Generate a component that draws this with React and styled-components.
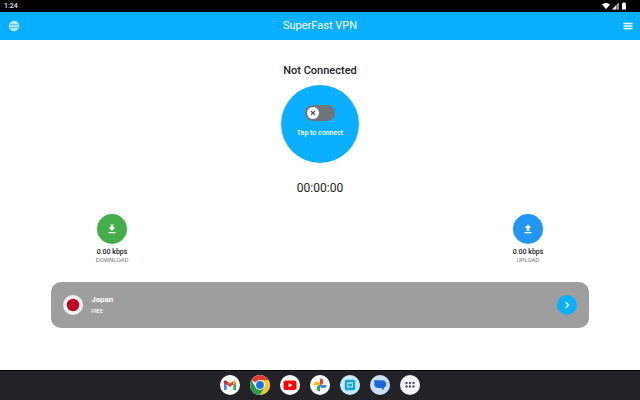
import React, { useState } from "react";
import styled, { createGlobalStyle } from "styled-components";

const GlobalStyle = createGlobalStyle`
  *, *::before, *::after { box-sizing: border-box; }
  body {
    margin: 0;
    background: #fff;
    color: #222;
    font-family: Roboto, "Liberation Sans", sans-serif;
  }
  button { font: inherit; color: inherit; border: 0; padding: 0; margin: 0; background: none; cursor: pointer; }
  svg { display: block; }
`;

const Screen = styled.div`
  min-height: 100vh;
  display: flex;
  flex-direction: column;
`;

const StatusBar = styled.div`
  height: 12px;
  padding: 0 12px 0 4px;
  display: flex;
  align-items: center;
  justify-content: space-between;
  background: #000;
  color: #e8e8e8;
  font-size: 7px;
  font-weight: 500;
  line-height: 12px;
`;

const StatusIcons = styled.div`
  display: flex;
  align-items: center;
  gap: 1px;
`;

const AppBar = styled.header`
  height: 28px;
  padding: 0 6px 0 8px;
  display: grid;
  grid-template-columns: 12px 1fr 14px;
  align-items: center;
  background: #0aafff;
  color: #fff;
`;

const Title = styled.h1`
  margin: 0;
  text-align: center;
  font-size: 11px;
  font-weight: 400;
  line-height: 16px;
`;

const IconButton = styled.button`
  width: 12px;
  height: 12px;
  display: grid;
  place-items: center;
  justify-self: ${(p) => (p.$end ? "end" : "start")};
`;

const Main = styled.main`
  flex: 1;
  display: flex;
  flex-direction: column;
  align-items: center;
  padding-top: 23px;
`;

const State = styled.p`
  margin: 0;
  font-size: 11px;
  font-weight: 500;
  line-height: 16px;
`;

const ConnectDisc = styled.label`
  width: 78px;
  height: 78px;
  margin-top: 6px;
  padding-top: 20px;
  display: flex;
  flex-direction: column;
  align-items: center;
  gap: 7px;
  border-radius: 50%;
  background: #0aafff;
  color: #fff;
  font-size: 7px;
  font-weight: 500;
  line-height: 10px;
  white-space: nowrap;
  cursor: pointer;
`;

const SwitchTrack = styled.span`
  width: 30px;
  height: 16px;
  padding: 2px;
  display: flex;
  align-items: center;
  justify-content: ${(p) => (p.$on ? "flex-end" : "flex-start")};
  border-radius: 8px;
  background: ${(p) => (p.$on ? "#4caf50" : "#6e757b")};
`;

const SwitchInput = styled.input`
  appearance: none;
  width: 0;
  height: 0;
  margin: 0;
`;

const SwitchKnob = styled.span`
  width: 12px;
  height: 12px;
  display: grid;
  place-items: center;
  border-radius: 50%;
  background: #fff;
`;

const Timer = styled.time`
  margin-top: 17px;
  font-size: 12px;
  line-height: 16px;
`;

const Stats = styled.section`
  width: 100%;
  margin-top: 18px;
  padding: 0 15%;
  display: flex;
  justify-content: space-between;
`;

const Stat = styled.div`
  width: 32px;
  display: flex;
  flex-direction: column;
  align-items: center;
  white-space: nowrap;
`;

const StatIcon = styled.span`
  width: 30px;
  height: 30px;
  display: grid;
  place-items: center;
  border-radius: 50%;
  background: ${(p) => p.$color};
`;

const Rate = styled.span`
  margin-top: 4px;
  font-size: 7px;
  font-weight: 500;
  line-height: 8px;
`;

const Caption = styled.span`
  color: #757575;
  font-size: 6px;
  line-height: 8px;
`;

const ServerCard = styled.button`
  width: 84%;
  height: 46px;
  margin-top: 18px;
  padding: 0 12px;
  display: flex;
  align-items: center;
  gap: 8px;
  border-radius: 10px;
  background: #9e9e9e;
  color: #fff;
  text-align: left;
`;

const Server = styled.span`
  flex: 1;
  display: flex;
  flex-direction: column;
  gap: 2px;
`;

const ServerName = styled.span`
  font-size: 8px;
  font-weight: 700;
  line-height: 10px;
`;

const ServerPlan = styled.span`
  font-size: 5px;
  font-weight: 500;
  line-height: 8px;
`;

const Chevron = styled.span`
  width: 20px;
  height: 20px;
  display: grid;
  place-items: center;
  border-radius: 50%;
  background: #0aafff;
`;

const Dock = styled.nav`
  height: 30px;
  padding-bottom: 1px;
  display: flex;
  align-items: center;
  justify-content: center;
  gap: 10px;
  border-top: 1px solid #000;
  background: #232327;
`;

const DockApp = styled.button`
  width: 20px;
  height: 20px;
  display: grid;
  place-items: center;
  overflow: hidden;
  border-radius: 50%;
  background: ${(p) => p.$tint || "#fff"};
`;

function Svg({ size = 20, box = 20, children }) {
  return (
    <svg width={size} height={size} viewBox={`0 0 ${box} ${box}`} fill="none" aria-hidden="true">
      {children}
    </svg>
  );
}

const petal = "M10 3.500a3.250 3.250 0 0 1 0 6.500z";

const apps = [
  {
    name: "Gmail",
    icon: (
      <Svg>
        <path d="M4 6.500v8.500h2.700V9z" fill="#4285f4" />
        <path d="M16 6.500v8.500h-2.700V9z" fill="#34a853" />
        <path d="M4 7c0-1.700 1.500-2 2.700-1L10 8.500 13.300 6v3.500L10 12 6.700 9.500 4 7.600z" fill="#ea4335" />
        <path d="M13.300 6c1.200-1 2.700-.7 2.700 1v.8l-2.700 2z" fill="#fbbc04" />
        <path d="M4 7c0-1.700 1.500-2 2.700-1v3.700L4 7.800z" fill="#c5221f" />
      </Svg>
    ),
  },
  {
    name: "Chrome",
    icon: (
      <Svg>
        <path d="M10 10 1.340 5A10 10 0 0 1 18.660 5z" fill="#e33b2e" />
        <path d="M10 10V5h8.660A10 10 0 0 1 10 20l4.330-7.500z" fill="#fcc31e" />
        <path d="M1.340 5A10 10 0 0 0 10 20l4.330-7.500L10 10 5.670 12.500z" fill="#27994a" />
        <circle cx="10" cy="10" r="5" fill="#fff" />
        <circle cx="10" cy="10" r="3.900" fill="#1a73e8" />
      </Svg>
    ),
  },
  {
    name: "YouTube",
    icon: (
      <Svg>
        <rect x="3.500" y="5.500" width="13" height="9.500" rx="2.500" fill="#f00" />
        <path d="m8.600 8 4 2.250-4 2.250z" fill="#fff" />
      </Svg>
    ),
  },
  {
    name: "Photos",
    icon: (
      <Svg>
        <path d={petal} fill="#ea4335" />
        <path d={petal} fill="#4285f4" transform="rotate(90 10 10)" />
        <path d={petal} fill="#34a853" transform="rotate(180 10 10)" />
        <path d={petal} fill="#fbbc04" transform="rotate(270 10 10)" />
      </Svg>
    ),
  },
  {
    name: "Files",
    tint: "#c4ecfa",
    icon: (
      <Svg>
        <rect x="4.800" y="4.800" width="10.400" height="10.400" rx="1.500" fill="#16a5d5" />
        <rect x="7" y="7.200" width="6" height="5.400" rx=".5" fill="#a9e2f5" />
        <path d="M8 8.700h4v1.800l-2 1.200-2-1.200z" fill="#16a5d5" />
      </Svg>
    ),
  },
  {
    name: "Messages",
    tint: "#c9dffb",
    icon: (
      <Svg>
        <path d="M8 5.300h4.500a3.900 3.900 0 0 1 1.300 7.500l-.3 2.400-2.300-2.100H8a3.900 3.900 0 0 1-3.500-5.500L4 6c-.2-.5 0-.7.5-.7z" fill="#1b66e0" />
      </Svg>
    ),
  },
  {
    name: "All apps",
    tint: "#f5f5f8",
    icon: (
      <Svg>
        {[6.5, 10, 13.5].map((x) =>
          [8, 11.5].map((y) => <circle key={`${x}-${y}`} cx={x} cy={y} r="1.200" fill="#4b4b75" />)
        )}
      </Svg>
    ),
  },
];

export default function App() {
  const [on, setOn] = useState(false);
  return (
    <Screen>
      <GlobalStyle />
      <StatusBar>
        <span>1:24</span>
        <StatusIcons>
          <Svg size={8} box={8}>
            <path d="M0 2.500C2 .4 6 .4 8 2.500L4 7.200z" fill="#fff" />
          </Svg>
          <Svg size={8} box={8}>
            <path d="M7.500.8v6.700H.8z" fill="#777" />
            <path d="M5 3.300v4.200H.8zM6.500 2v5.500h1V.8z" fill="#ddd" />
          </Svg>
          <Svg size={8} box={8}>
            <path d="M2 1.200h1V.6h2v.6h1v6.400H2z" fill="#fff" />
          </Svg>
        </StatusIcons>
      </StatusBar>
      <AppBar>
        <IconButton aria-label="Choose location">
          <Svg size={12} box={12}>
            <circle cx="6" cy="6" r="4.700" fill="#9bdcff" stroke="#e5f6ff" />
            <ellipse cx="6" cy="6" rx="2" ry="4.500" stroke="#e5f6ff" strokeWidth=".8" />
            <path d="M1.500 4.500h9M1.500 7.500h9" stroke="#38b5f5" strokeWidth=".7" />
          </Svg>
        </IconButton>
        <Title>SuperFast VPN</Title>
        <IconButton $end aria-label="Menu">
          <Svg size={12} box={12}>
            <path d="M1.500 3.500h9M1.500 6h9M1.500 8.500h9" stroke="#fff" strokeWidth="1.500" />
          </Svg>
        </IconButton>
      </AppBar>
      <Main>
        <State>{on ? "Connected" : "Not Connected"}</State>
        <ConnectDisc>
          <SwitchTrack $on={on}>
            <SwitchInput type="checkbox" role="switch" checked={on} onChange={() => setOn(!on)} />
            <SwitchKnob>
              <Svg size={8} box={8}>
                <path d="m2 2 4 4m0-4L2 6" stroke="#555" strokeWidth="1.200" />
              </Svg>
            </SwitchKnob>
          </SwitchTrack>
          Tap to connect
        </ConnectDisc>
        <Timer>00:00:00</Timer>
        <Stats>
          <Stat>
            <StatIcon $color="#44ae4b">
              <Svg size={12} box={12}>
                <path d="M4.700 1.500h2.600v3h2L6 7.900 2.700 4.500h2zM2.500 9h7v1.200h-7z" fill="#fff" />
              </Svg>
            </StatIcon>
            <Rate>0.00 kbps</Rate>
            <Caption>DOWNLOAD</Caption>
          </Stat>
          <Stat>
            <StatIcon $color="#2196f3">
              <Svg size={12} box={12}>
                <path d="M4.700 8h2.600V5h2L6 1.600 2.700 5h2zM2.500 9h7v1.200h-7z" fill="#fff" />
              </Svg>
            </StatIcon>
            <Rate>0.00 kbps</Rate>
            <Caption>UPLOAD</Caption>
          </Stat>
        </Stats>
        <ServerCard>
          <Svg>
            <circle cx="10" cy="10" r="10" fill="#f3f3f3" />
            <circle cx="10" cy="10" r="6.200" fill="#c00024" />
          </Svg>
          <Server>
            <ServerName>Japan</ServerName>
            <ServerPlan>FREE</ServerPlan>
          </Server>
          <Chevron>
            <Svg size={8} box={8}>
              <path d="m2.500 1 3 3-3 3" stroke="#fff" strokeWidth="1.200" />
            </Svg>
          </Chevron>
        </ServerCard>
      </Main>
      <Dock>
        {apps.map((app) => (
          <DockApp key={app.name} aria-label={app.name} $tint={app.tint}>
            {app.icon}
          </DockApp>
        ))}
      </Dock>
    </Screen>
  );
}
